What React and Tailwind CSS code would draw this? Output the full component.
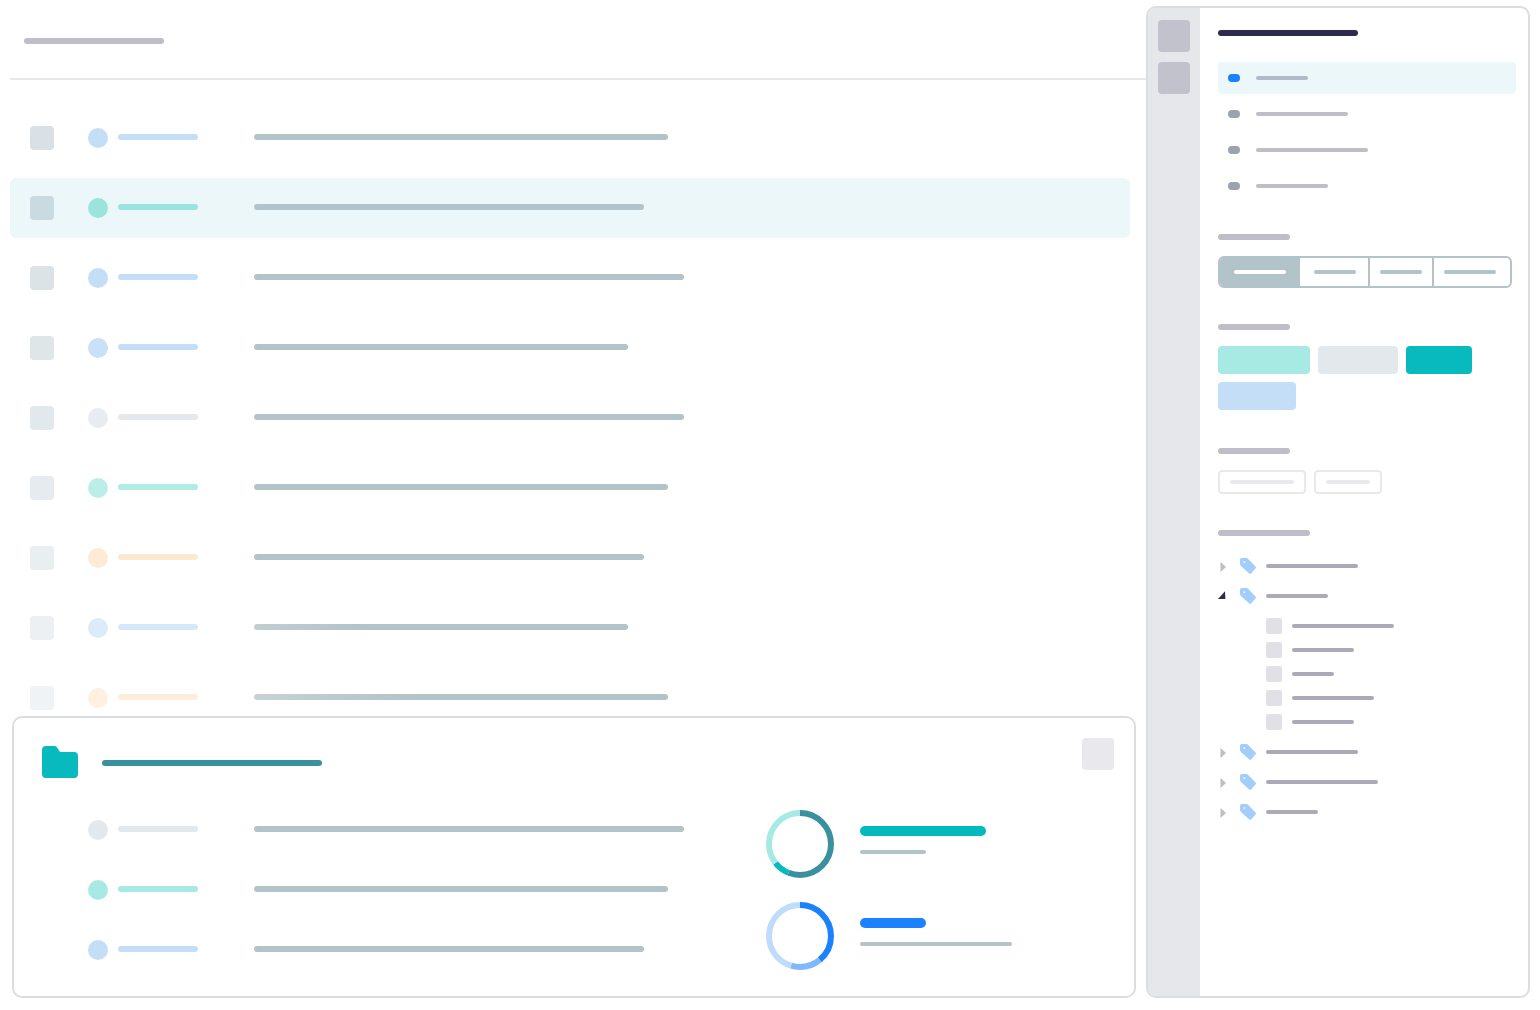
import React, { useState } from "react";
import clsx from "clsx";

const messages = [
  { box: "bg-[#d9e1e6]", dot: "bg-[#c5def7]", name: "bg-[#c5def7]", line: "w-[414px] bg-[#b2c3c9]" },
  { box: "bg-[#cadae1]", dot: "bg-[#9ae4dd]", name: "bg-[#9ae4dd]", line: "w-[390px] bg-[#b2c3c9]", active: true },
  { box: "bg-[#dce3e7]", dot: "bg-[#c5def7]", name: "bg-[#c5def7]", line: "w-[430px] bg-[#b2c3c9]" },
  { box: "bg-[#dfe6e8]", dot: "bg-[#c8e0f8]", name: "bg-[#c5def7]", line: "w-[374px] bg-[#b2c3c9]" },
  { box: "bg-[#e2e9ec]", dot: "bg-[#e8ebf0]", name: "bg-[#e5e9ed]", line: "w-[430px] bg-[#b2c3c9]" },
  { box: "bg-[#e6ebf0]", dot: "bg-[#bbeee8]", name: "bg-[#b0ebe4]", line: "w-[414px] bg-[#b2c3c9]" },
  { box: "bg-[#e9eef0]", dot: "bg-[#feebd5]", name: "bg-[#fde9d0]", line: "w-[390px] bg-[#b2c3c9]" },
  { box: "bg-[#ecf0f2]", dot: "bg-[#dcebfa]", name: "bg-[#d6e8fa]", line: "w-[374px] bg-linear-to-r from-[#c0ced2] to-[#b2c3c9] to-30%" },
  { box: "bg-[#eff3f6]", dot: "bg-[#fff0df]", name: "bg-[#feedda]", line: "w-[414px] bg-linear-to-r from-[#c6d2d6] to-[#b2c3c9] to-40%" },
];

const folderRows = [
  { dot: "bg-[#e3e8ec]", name: "bg-[#e3e8ec]", line: "w-[430px] bg-[#b2c3c9]" },
  { dot: "bg-[#a7eae3]", name: "bg-[#a7eae3]", line: "w-[414px] bg-[#b2c3c9]" },
  { dot: "bg-[#c5def7]", name: "bg-[#c5def7]", line: "w-[390px] bg-[#b2c3c9]" },
];

const charts = [
  {
    segments: [
      { color: "#39909e", from: 0, size: 56 },
      { color: "#08babe", from: 56, size: 8.5 },
      { color: "#a7eae3", from: 64.5, size: 35.5 },
    ],
    value: "w-[126px] bg-[#02babd]",
    label: "w-[66px]",
  },
  {
    segments: [
      { color: "#1b81fc", from: 0, size: 39 },
      { color: "#80b8fc", from: 39, size: 15.7 },
      { color: "#bfdcfd", from: 54.7, size: 45.3 },
    ],
    value: "w-[66px] bg-[#1b81fc]",
    label: "w-[152px]",
  },
];

const filters = ["w-[52px]", "w-[92px]", "w-[112px]", "w-[72px]"];

const tabs = [
  { seg: "w-20 pl-3.5", bar: "w-[52px]" },
  { seg: "w-[70px] pl-3.5 border-r-2", bar: "w-[42px]" },
  { seg: "w-16 pl-2.5 border-r-2", bar: "w-[42px]" },
  { seg: "w-[76px] pl-2.5", bar: "w-[52px]" },
];

const colorTags = ["w-[92px] bg-[#a7eae3]", "w-20 bg-[#e3e8ec]", "w-[66px] bg-[#08babe]", "w-[78px] bg-[#c5def7]"];

const tree = [
  { bar: "w-[92px]" },
  { bar: "w-[62px]", children: ["w-[102px]", "w-[62px]", "w-[42px]", "w-[82px]", "w-[62px]"] },
  { bar: "w-[92px]" },
  { bar: "w-[112px]" },
  { bar: "w-[52px]" },
];

function Bar({ className }) {
  return <span className={clsx("block shrink-0 rounded-full", className)} />;
}

function Row({ row }) {
  return (
    <>
      <span className={clsx("size-5 shrink-0 rounded-full", row.dot)} />
      <Bar className={clsx("ml-2.5 mb-0.5 h-1.5 w-20", row.name)} />
      <Bar className={clsx("ml-14 mb-0.5 h-1.5", row.line)} />
    </>
  );
}

function Donut({ segments }) {
  return (
    <svg className="size-[68px] shrink-0" viewBox="0 0 68 68" fill="none" strokeWidth="6">
      {segments.map((s) => (
        <circle
          key={s.color}
          cx="34"
          cy="34"
          r="31"
          pathLength="100"
          stroke={s.color}
          strokeDasharray={`${s.size} ${100 - s.size}`}
          strokeDashoffset={-s.from}
          transform="rotate(-90 34 34)"
        />
      ))}
    </svg>
  );
}

function FolderIcon() {
  return (
    <svg className="h-8 w-9 shrink-0" viewBox="0 0 36 32" fill="#08babe">
      <path d="M4 0H12.500Q14 0 14.900 1.200L18 6H32Q36 6 36 10V28Q36 32 32 32H4Q0 32 0 28V4Q0 0 4 0Z" />
    </svg>
  );
}

function TagIcon() {
  return (
    <svg className="size-4 shrink-0" viewBox="0 0 16 16" fill="#a3cdfd" fillRule="evenodd">
      <path d="M1.700 0H6.300Q7.300 0 8 .7L15.500 8.500Q16.400 9.400 15.600 10.300L11.100 15.400Q10.200 16.300 9.300 15.500L.9 7.900Q0 7 0 6V1.700Q0 0 1.700 0ZM4.300 3.200A.9 .9 0 1 0 4.300 5A.9 .9 0 1 0 4.300 3.200Z" />
    </svg>
  );
}

function Caret({ open }) {
  return (
    <svg className="size-3 shrink-0" viewBox="0 0 12 12">
      {open ? <path d="M0 9L7 1.200L7.400 9Z" fill="#2d2b4e" /> : <path d="M2.500 2L8 7L2.500 12Z" fill="#bebdc8" />}
    </svg>
  );
}

function Section({ className, label, children }) {
  return (
    <section className={className}>
      <Bar className={clsx("h-1.5 bg-[#bebdc8]", label)} />
      {children}
    </section>
  );
}

function FolderPanel() {
  return (
    <section className="relative -mt-3 ml-3 mr-2.5 rounded-[10px] border-2 border-[#dbdde0] bg-white pb-4">
      <header className="flex items-start justify-between pl-7 pr-5 pt-5">
        <div className="flex items-center gap-6 pt-2">
          <FolderIcon />
          <Bar className="mt-0.5 h-1.5 w-[220px] bg-[#39909e]" />
        </div>
        <button className="size-8 rounded bg-[#e8e8ed]" aria-label="Close" />
      </header>
      <div className="mt-[22px] grid grid-cols-[678px_1fr] pl-[74px]">
        <div>
          {folderRows.map((row, i) => (
            <div key={i} className="flex h-15 items-center">
              <Row row={row} />
            </div>
          ))}
        </div>
        <div className="flex flex-col gap-6 pt-2.5">
          {charts.map((c, i) => (
            <div key={i} className="flex gap-[26px]">
              <Donut segments={c.segments} />
              <div className="flex flex-col gap-3.5 pt-4">
                <Bar className={clsx("h-2.5", c.value)} />
                <Bar className={clsx("h-1 bg-[#b2c3c9]", c.label)} />
              </div>
            </div>
          ))}
        </div>
      </div>
    </section>
  );
}

function Sidebar() {
  const [filter, setFilter] = useState(0);
  const [tab, setTab] = useState(0);

  return (
    <aside className="mb-3 mr-2.5 mt-1.5 flex w-96 shrink-0 overflow-hidden rounded-[10px] border-2 border-[#dbdde0] bg-white">
      <nav className="flex w-[52px] shrink-0 flex-col items-center gap-2.5 bg-[#e5e7eb] pt-3">
        <button className="size-8 rounded bg-[#c2c2cd]" aria-label="Filters" />
        <button className="size-8 rounded bg-[#c2c2cd]" aria-label="Tags" />
      </nav>

      <div className="flex-1 pl-[18px] pr-3 pt-[22px]">
        <Bar className="h-1.5 w-[140px] bg-[#2d2b4e]" />

        <div className="mt-[26px] flex flex-col gap-1">
          {filters.map((w, i) => (
            <label key={i} className={clsx("flex h-8 items-center gap-4 rounded pl-2.5", filter === i && "bg-[#ebf7f9]")}>
              <input
                type="radio"
                name="filter"
                aria-label={`Filter ${i + 1}`}
                checked={filter === i}
                onChange={() => setFilter(i)}
                className="h-2 w-3 appearance-none rounded-full bg-[#9ba2b0] checked:bg-[#1b81fc]"
              />
              <Bar className={clsx("h-1", w, filter === i ? "bg-[#afbbc6]" : "bg-[#bebdc8]")} />
            </label>
          ))}
        </div>

        <Section className="mt-8" label="w-[72px]">
          <div className="mt-4 flex h-8 w-fit overflow-hidden rounded-md border-2 border-[#b2c3c9]">
            {tabs.map((t, i) => (
              <button
                key={i}
                aria-label={`Tab ${i + 1}`}
                onClick={() => setTab(i)}
                className={clsx("flex items-center border-[#b2c3c9]", t.seg, tab === i && "bg-[#b2c3c9]")}
              >
                <Bar className={clsx("h-1", t.bar, tab === i ? "bg-white" : "bg-[#b2c3c9]")} />
              </button>
            ))}
          </div>
        </Section>

        <Section className="mt-9" label="w-[72px]">
          <div className="mt-4 flex flex-wrap gap-2">
            {colorTags.map((c, i) => (
              <button key={i} aria-label={`Label ${i + 1}`} className={clsx("h-7 rounded", c)} />
            ))}
          </div>
        </Section>

        <Section className="mt-[38px]" label="w-[72px]">
          <div className="mt-4 flex gap-2">
            <button aria-label="Option 1" className="flex h-6 items-center rounded border-2 border-[#e9e9eb] px-2.5">
              <Bar className="h-1 w-16 bg-[#e8e8ed]" />
            </button>
            <button aria-label="Option 2" className="flex h-6 items-center rounded border-2 border-[#e9e9eb] px-2.5">
              <Bar className="h-1 w-11 bg-[#e8e8ed]" />
            </button>
          </div>
        </Section>

        <Section className="mt-9" label="w-[92px]">
          <ul className="mt-[15px]">
            {tree.map((node, i) => (
              <li key={i}>
                <button aria-label={`Group ${i + 1}`} className="flex h-[30px] items-center gap-2.5">
                  <Caret open={!!node.children} />
                  <TagIcon />
                  <Bar className={clsx("h-1 bg-[#abaab9]", node.bar)} />
                </button>
                {node.children && (
                  <ul className="py-[3px] pl-12">
                    {node.children.map((w, j) => (
                      <li key={j}>
                        <label className="flex h-6 items-center gap-2.5">
                          <input type="checkbox" aria-label={`Item ${j + 1}`} className="size-4 appearance-none rounded-xs bg-[#e0e0e6]" />
                          <Bar className={clsx("h-1 bg-[#abaab9]", w)} />
                        </label>
                      </li>
                    ))}
                  </ul>
                )}
              </li>
            ))}
          </ul>
        </Section>
      </div>
    </aside>
  );
}

export default function App() {
  return (
    <div className="flex min-h-screen bg-white font-['Inter',sans-serif]">
      <main className="min-w-0 flex-1 pb-3">
        <header className="ml-2.5 border-b-2 border-[#e8e8ea] pb-[34px] pl-3.5 pt-[38px]">
          <Bar className="h-1.5 w-[140px] bg-[#bebdc8]" />
        </header>

        <ul className="ml-2.5 mr-4 mt-7 flex flex-col gap-2.5">
          {messages.map((m, i) => (
            <li key={i} className={clsx("flex h-15 items-center rounded-md pl-5", m.active && "bg-[#ebf7f9]")}>
              <input
                type="checkbox"
                aria-label={`Select row ${i + 1}`}
                className={clsx("mr-[34px] size-6 shrink-0 appearance-none rounded", m.box)}
              />
              <Row row={m} />
            </li>
          ))}
        </ul>

        <FolderPanel />
      </main>

      <Sidebar />
    </div>
  );
}
